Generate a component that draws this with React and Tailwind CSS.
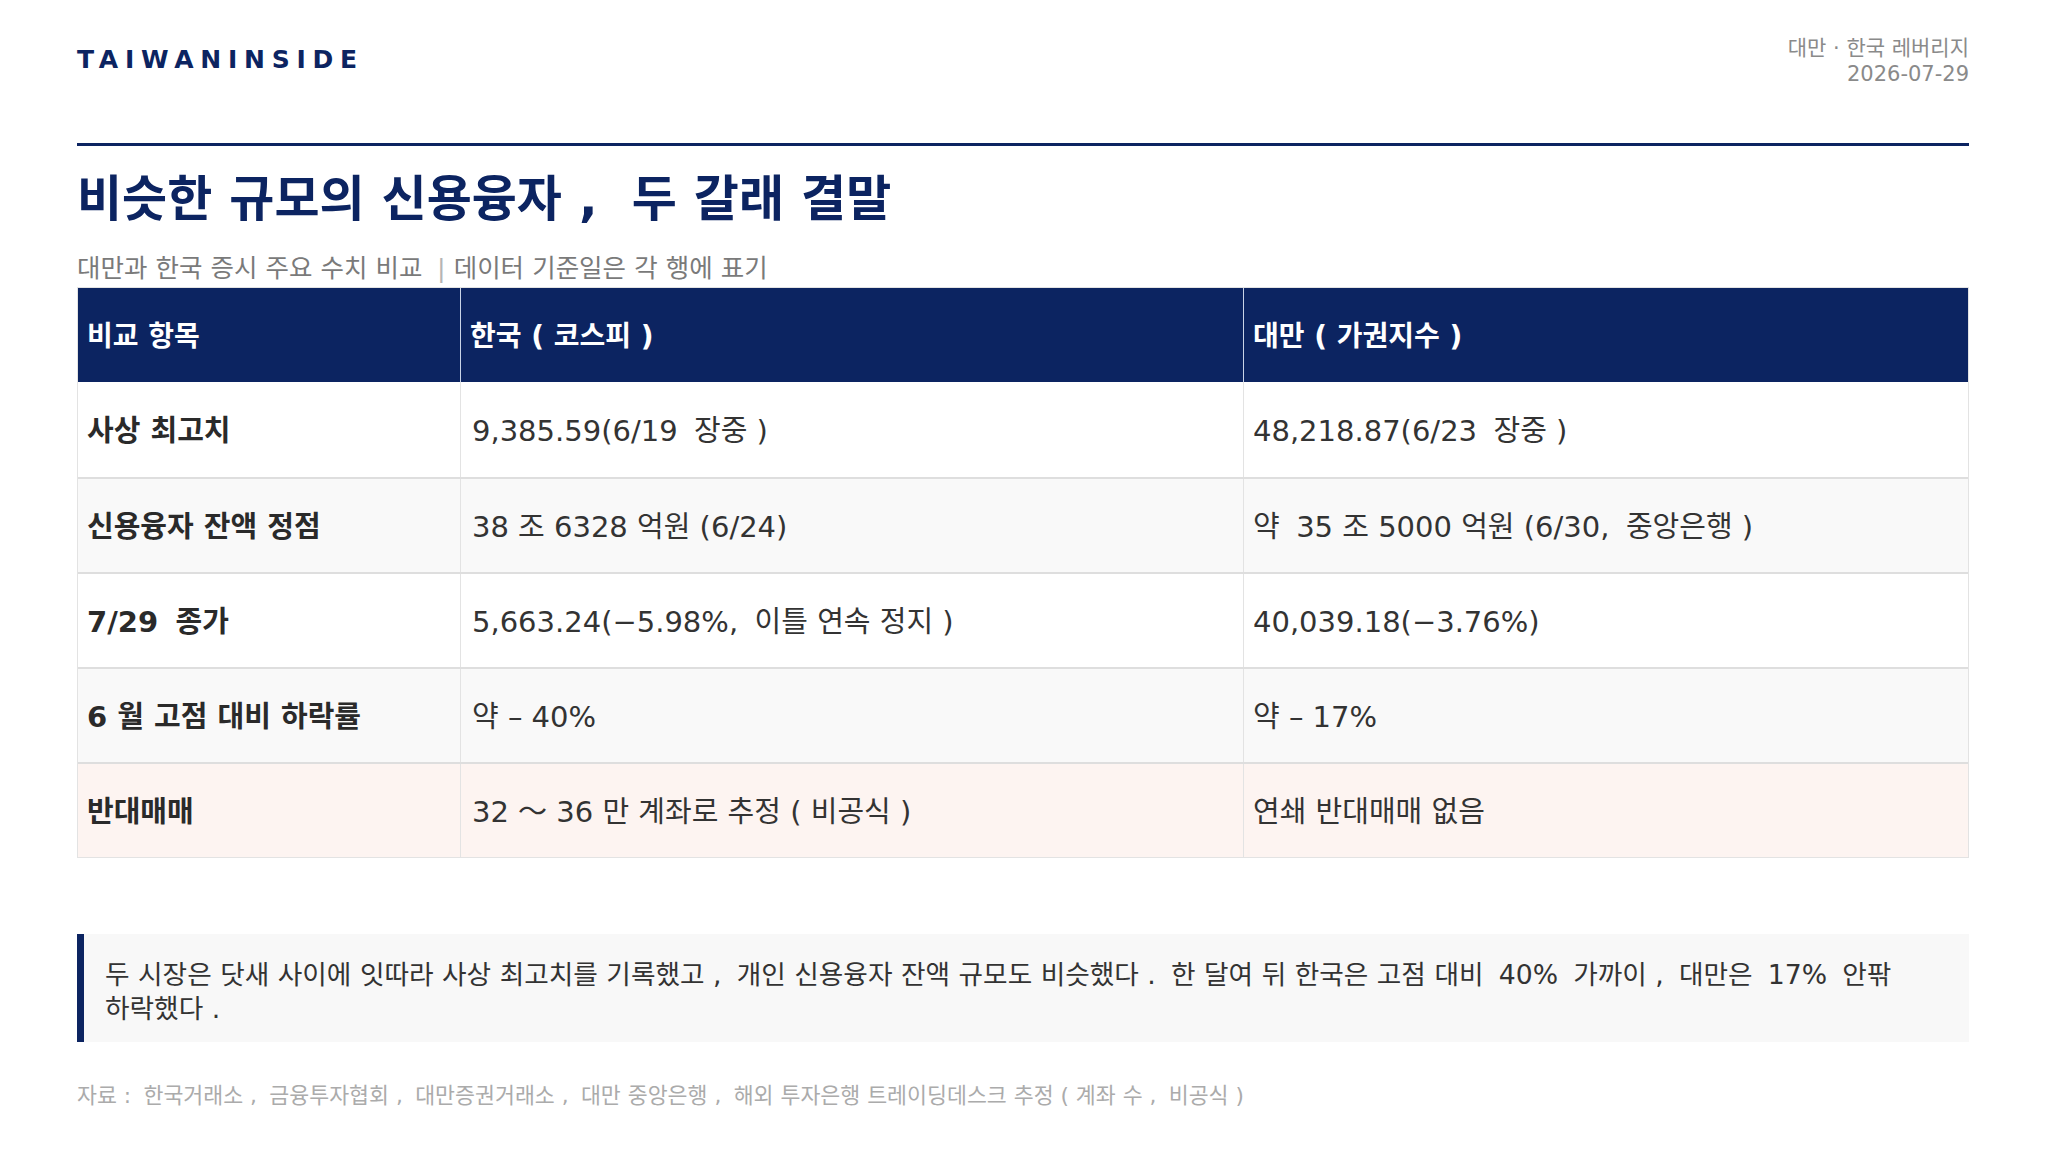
import React from "react";

const F = { fontFamily: '"DejaVu Sans", "Noto Sans CJK KR", sans-serif' };

const rows = [
  { label: "사상 최고치", kr: "9,385.59(6/19\u2005 장중 )", tw: "48,218.87(6/23\u2005 장중 )", bg: "bg-white" },
  { label: "신용융자 잔액 정점", kr: "38 조 6328 억원 (6/24)", tw: "약\u2005 35 조 5000 억원 (6/30,\u2005 중앙은행 )", bg: "bg-[#f9f9f9]" },
  { label: "7/29\u2005 종가", kr: "5,663.24(−5.98%,\u2005 이틀 연속 정지 )", tw: "40,039.18(−3.76%)", bg: "bg-white" },
  { label: "6 월 고점 대비 하락률", kr: "약 – 40%", tw: "약 – 17%", bg: "bg-[#f9f9f9]" },
  { label: "반대매매", kr: "32 ～ 36 만 계좌로 추정 ( 비공식 )", tw: "연쇄 반대매매 없음", bg: "bg-[#fdf4f1]" },
];

export default function App() {
  return (
    <div className="w-[2046px] h-[1151px] bg-white px-[77px] pt-[38px]" style={F}>
      <div className="flex justify-between items-start h-[105px]">
        <div className="pt-[7px] text-[25px] font-bold tracking-[0.27em] text-[#0c2461] leading-[30px]">TAIWANINSIDE</div>
        <div className="-mt-[3px] text-right text-[21px] leading-[26px] text-[#8a8a8a]">
          <div>대만 · 한국 레버리지</div>
          <div>2026-07-29</div>
        </div>
      </div>
      <div className="h-[3px] bg-[#0c2461]" />
      <h1 className="mt-[22px] text-[49px] font-bold leading-[64px] text-[#0c2461]">비슷한 규모의 신용융자 ,{"\u00a0"} 두 갈래 결말</h1>
      <div className="mt-[19px] text-[25.5px] leading-[34px] text-[#7a7a7a]">
        대만과 한국 증시 주요 수치 비교{"\u2005"} <span className="text-[#b5b5b5]">|</span> 데이터 기준일은 각 행에 표기
      </div>
      <div className="mt-[2px] border border-[#e3e3e3]">
        <div className="grid grid-cols-[383px_783px_1fr] h-[94px] bg-[#0c2461] text-white font-bold text-[28px]">
          <div className="flex items-center px-[9px] pt-[3px] border-r border-[#c9d3e6]">비교 항목</div>
          <div className="flex items-center px-[9px] pt-[3px] border-r border-[#c9d3e6]">한국 ( 코스피 )</div>
          <div className="flex items-center px-[9px] pt-[3px]">대만 ( 가권지수 )</div>
        </div>
        {rows.map((r, i) => (
          <div key={i} className={`grid grid-cols-[383px_783px_1fr] h-[95px] text-[29px] ${r.bg} ${i > 0 ? "border-t-2 border-[#dedede]" : ""}`}>
            <div className="flex items-center px-[9px] pt-[4px] border-r border-[#e3e3e3] font-bold text-[#2a2a2a]">{r.label}</div>
            <div className="flex items-center px-[11px] pt-[4px] border-r border-[#e3e3e3] text-[#333333]">{r.kr}</div>
            <div className="flex items-center px-[9px] pt-[4px] text-[#333333]">{r.tw}</div>
          </div>
        ))}
      </div>
      <div className="mt-[76px] h-[108px] border-l-[7px] border-[#0c2461] bg-[#f8f8f8] pl-[21px] pr-[50px] pt-[24px] text-[26.7px] leading-[34px] text-[#333333]">
        두 시장은 닷새 사이에 잇따라 사상 최고치를 기록했고 ,{"\u2005"} 개인 신용융자 잔액 규모도 비슷했다 .{"\u2005"} 한 달여 뒤 한국은 고점 대비{"\u2005"} 40%{"\u2005"} 가까이 ,{"\u2005"} 대만은{"\u2005"} 17%{"\u2005"} 안팎 하락했다 .
      </div>
      <div className="mt-[40px] text-[21.7px] leading-[28px] text-[#ababab]">
        자료 :{"\u2005"} 한국거래소 ,{"\u2005"} 금융투자협회 ,{"\u2005"} 대만증권거래소 ,{"\u2005"} 대만 중앙은행 ,{"\u2005"} 해외 투자은행 트레이딩데스크 추정 ( 계좌 수 ,{"\u2005"} 비공식 )
      </div>
    </div>
  );
}
